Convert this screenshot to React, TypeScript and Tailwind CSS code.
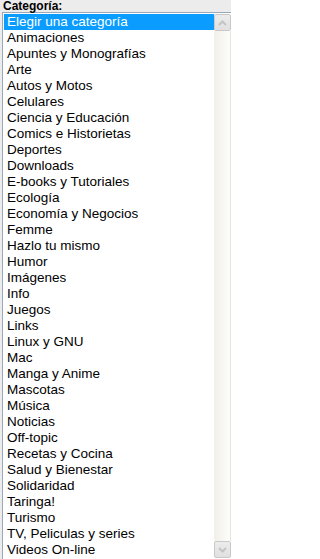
import React from 'react'

const categories = [
  'Elegir una categoría',
  'Animaciones',
  'Apuntes y Monografías',
  'Arte',
  'Autos y Motos',
  'Celulares',
  'Ciencia y Educación',
  'Comics e Historietas',
  'Deportes',
  'Downloads',
  'E-books y Tutoriales',
  'Ecología',
  'Economía y Negocios',
  'Femme',
  'Hazlo tu mismo',
  'Humor',
  'Imágenes',
  'Info',
  'Juegos',
  'Links',
  'Linux y GNU',
  'Mac',
  'Manga y Anime',
  'Mascotas',
  'Música',
  'Noticias',
  'Off-topic',
  'Recetas y Cocina',
  'Salud y Bienestar',
  'Solidaridad',
  'Taringa!',
  'Turismo',
  'TV, Peliculas y series',
  'Videos On-line',
]

function ScrollButton({ dir }: { dir: 'up' | 'down' }) {
  return (
    <div className="flex h-[17px] w-[17px] shrink-0 items-center justify-center rounded-[2px] border border-[#c9c9c9] bg-gradient-to-b from-[#ececec] to-[#e0e0e0]">
      <svg width="9" height="6" viewBox="0 0 9 6">
        <path
          d={dir === 'up' ? 'M1 5 L4.5 1.5 L8 5' : 'M1 1 L4.5 4.5 L8 1'}
          fill="none"
          stroke="#c4c4c4"
          strokeWidth="2"
        />
      </svg>
    </div>
  )
}

export default function App() {
  return (
    <div className="h-[559px] w-[231px] overflow-hidden bg-[#ececec] font-['Liberation_Sans',Arial,sans-serif]">
      <div className="h-[12px] pl-[3px] text-[12px] leading-[12px] font-bold text-black">Categoría:</div>
      <div className="ml-[2px] flex w-[240px] border border-[#98a9bd] bg-white p-px">
        <ul className="w-[210px] shrink-0">
          {categories.map((c, i) => (
            <li
              key={c}
              className={
                'h-[16px] pl-[3px] text-[13.5px] leading-[16px] whitespace-nowrap ' +
                (i === 0 ? 'bg-[#0a9dff] text-white' : 'text-black')
              }
            >
              {c}
            </li>
          ))}
        </ul>
        <div className="flex w-[17px] shrink-0 flex-col">
          <ScrollButton dir="up" />
          <div className="flex-1 border-r border-[#e6e4dc] bg-gradient-to-r from-[#f1efe8] to-[#fdfdfb]" />
          <ScrollButton dir="down" />
        </div>
      </div>
    </div>
  )
}
